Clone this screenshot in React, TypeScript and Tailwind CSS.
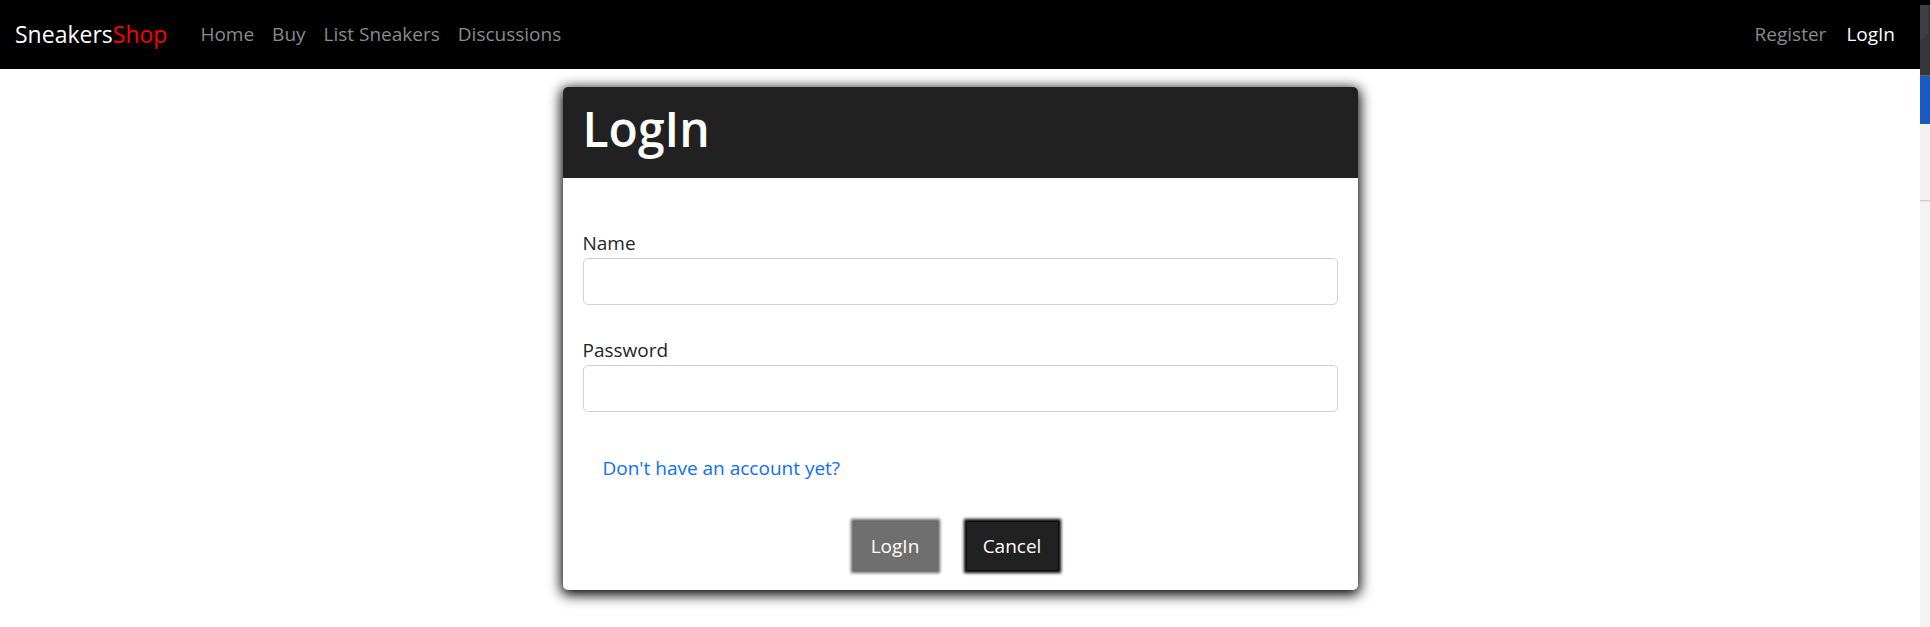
const navLinks = ["Home", "Buy", "List Sneakers", "Discussions"];

function Field({ id, label, type }: { id: string; label: string; type: string }) {
  return (
    <div>
      <label htmlFor={id} className="block leading-[30px]">
        {label}
      </label>
      <input
        id={id}
        type={type}
        className="block h-[47px] w-full rounded-[5px] border border-[#ced4da] bg-white px-4 outline-none focus:border-[#86b7fe]"
      />
    </div>
  );
}

function WindowEdge() {
  return (
    <aside aria-hidden="true" className="flex w-[10px] shrink-0 flex-col bg-[#f3f3f3]">
      <div className="h-[5px] bg-black" />
      <div className="h-[70px] bg-[#35363a]">
        <div className="h-[34px] w-2 rounded-br-lg bg-[#3c4043]" />
      </div>
      <div className="h-px bg-[#5f6368]" />
      <div className="h-12 bg-[#185abd]" />
      <div className="h-[76px] bg-[#f3f2f1]" />
      <div className="h-px bg-[#cfcfcf]" />
      <div className="h-px bg-[#e4e4e4]" />
    </aside>
  );
}

export default function App() {
  return (
    <div className="flex min-h-screen bg-white font-['Open_Sans','Noto_Sans',sans-serif] text-[19px] text-[#212529]">
      <div className="min-w-0 flex-1">
        <nav className="flex h-[69px] items-center bg-black px-[15px] text-[#8a8a8a]">
          <a href="#" className="mr-6 text-[23px] text-white">
            Sneakers<span className="text-[#ff0000]">Shop</span>
          </a>
          <div className="flex flex-1">
            {navLinks.map((name) => (
              <a key={name} href="#" className="px-[9px]">
                {name}
              </a>
            ))}
          </div>
          <div className="flex">
            <a href="#" className="px-[10px]">
              Register
            </a>
            <a href="#" className="px-[10px] text-white">
              LogIn
            </a>
          </div>
        </nav>

        <main className="mx-auto mt-[18px] max-w-[795px] rounded-[5px] bg-white shadow-[0_3px_13px_2px_#000]">
          <header className="h-[91px] rounded-t-[5px] bg-[#212121] px-5 pt-3">
            <h1 className="text-5xl leading-[60px] font-semibold text-white">LogIn</h1>
          </header>
          <form className="px-5 pt-[50px] pb-5" onSubmit={(e) => e.preventDefault()}>
            <div className="flex flex-col gap-[30px]">
              <Field id="name" label="Name" type="text" />
              <Field id="password" label="Password" type="password" />
            </div>
            <a href="#" className="mt-[41px] ml-5 block w-fit leading-[30px] text-[#0d6efd]">
              Don't have an account yet?
            </a>
            <div className="mt-[39px] mr-[9px] flex justify-center gap-[30px]">
              <button
                type="submit"
                className="h-12 w-[83px] bg-[#6f6f6f] text-white shadow-[0_0_3px_3px_#636363]"
              >
                LogIn
              </button>
              <button
                type="button"
                className="h-12 w-[91px] bg-[#212121] text-white shadow-[0_0_3px_3px_#000]"
              >
                Cancel
              </button>
            </div>
          </form>
        </main>
      </div>
      <WindowEdge />
    </div>
  );
}
